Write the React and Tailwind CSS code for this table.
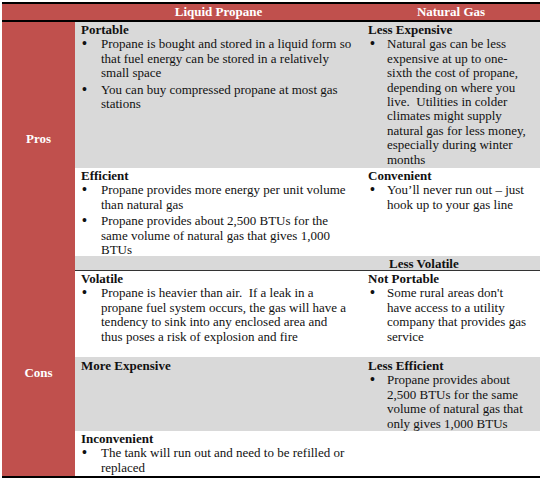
import React from "react";

const F = { fontFamily: '"Liberation Serif", "Times New Roman", serif' };

function Item({ lines, indent = "w-[20px]", bulletPad = "pl-[1px]" }) {
  return (
    <div className="flex mb-[2px]">
      <div className={`${indent} shrink-0 ${bulletPad} text-[14px] font-bold leading-[14.4px]`}>•</div>
      <div>
        {lines.map((l, i) => (
          <div key={i} className="whitespace-pre">{l}</div>
        ))}
      </div>
    </div>
  );
}

function Cell({ bg, title, titleClass = "", items = [], pad = "pt-[2px]", right }) {
  return (
    <div className={`${bg} ${pad} pl-[6px] pr-[2px]`}>
      {title && <div className={`font-bold whitespace-pre ${titleClass}`}>{title}</div>}
      {items.map((it, i) => (
        <Item
          key={i}
          lines={it}
          indent={right ? "w-[19px]" : "w-[20px]"}
          bulletPad={right ? "pl-[2px]" : "pl-[1px]"}
        />
      ))}
    </div>
  );
}

export default function App() {
  const gray = "bg-[#d9d9d9]";
  const white = "bg-white";
  return (
    <div className="w-[544px] h-[480px] bg-white pt-[2px] pl-[2px]" style={F}>
      <div
        className="w-[538px] grid grid-cols-[73px_287px_178px] grid-rows-[18px_146px_88px_15px_86px_74px_45px] border-t-2 border-b-2 border-black text-[13px] leading-[14.4px] text-[#111]"
      >
        {/* header */}
        <div className="bg-[#c0504d] border-b-2 border-black"></div>
        <div className="bg-[#c0504d] border-b-2 border-black text-white font-bold text-center leading-[16px]">Liquid Propane</div>
        <div className="bg-[#c0504d] border-b-2 border-black text-white font-bold text-center leading-[16px]">Natural Gas</div>

        {/* Pros label */}
        <div className="row-span-3 bg-[#c0504d] flex items-start justify-center text-white font-bold">
          <div className="pt-[110px]">Pros</div>
        </div>
        <Cell
          bg={gray}
          pad="pt-[1px]"
          title="Portable"
          items={[
            ["Propane is bought and stored in a liquid form so", "that fuel energy can be stored in a relatively", "small space"],
            ["You can buy compressed propane at most gas", "stations"],
          ]}
        />
        <Cell
          bg={gray}
          right
          pad="pt-[1px]"
          title="Less Expensive"
          items={[
            [
              "Natural gas can be less",
              "expensive at up to one-",
              "sixth the cost of propane,",
              "depending on where you",
              "live.  Utilities in colder",
              "climates might supply",
              "natural gas for less money,",
              "especially during winter",
              "months",
            ],
          ]}
        />
        <Cell
          bg={white}
          pad="pt-[1px]"
          title="Efficient"
          items={[
            ["Propane provides more energy per unit volume", "than natural gas"],
            ["Propane provides about 2,500 BTUs for the", "same volume of natural gas that gives 1,000", "BTUs"],
          ]}
        />
        <Cell
          bg={white}
          right
          pad="pt-[1px]"
          title="Convenient"
          items={[["You\u2019ll never run out \u2013 just", "hook up to your gas line"]]}
        />
        <div className={`${gray} border-b border-[#333]`}></div>
        <div className={`${gray} border-b border-[#333] pl-[27px] pt-[1px] font-bold whitespace-pre leading-[13px]`}>Less Volatile</div>

        {/* Cons label */}
        <div className="row-span-3 bg-[#c0504d] flex items-start justify-center text-white font-bold">
          <div className="pt-[95px]">Cons</div>
        </div>
        <Cell
          bg={white}
          pad="pt-[1px]"
          title="Volatile"
          items={[
            [
              "Propane is heavier than air.  If a leak in a",
              "propane fuel system occurs, the gas will have a",
              "tendency to sink into any enclosed area and",
              "thus poses a risk of explosion and fire",
            ],
          ]}
        />
        <Cell
          bg={white}
          right
          pad="pt-[1px]"
          title="Not Portable"
          items={[["Some rural areas don't", "have access to a utility", "company that provides gas", "service"]]}
        />
        <Cell bg={gray} pad="pt-[2px]" title="More Expensive" />
        <Cell
          bg={gray}
          right
          pad="pt-[2px]"
          title="Less Efficient"
          items={[["Propane provides about", "2,500 BTUs for the same", "volume of natural gas that", "only gives 1,000 BTUs"]]}
        />
        <Cell
          bg={white}
          pad="pt-[1px]"
          title="Inconvenient"
          items={[["The tank will run out and need to be refilled or", "replaced"]]}
        />
        <div className={white}></div>
      </div>
    </div>
  );
}
